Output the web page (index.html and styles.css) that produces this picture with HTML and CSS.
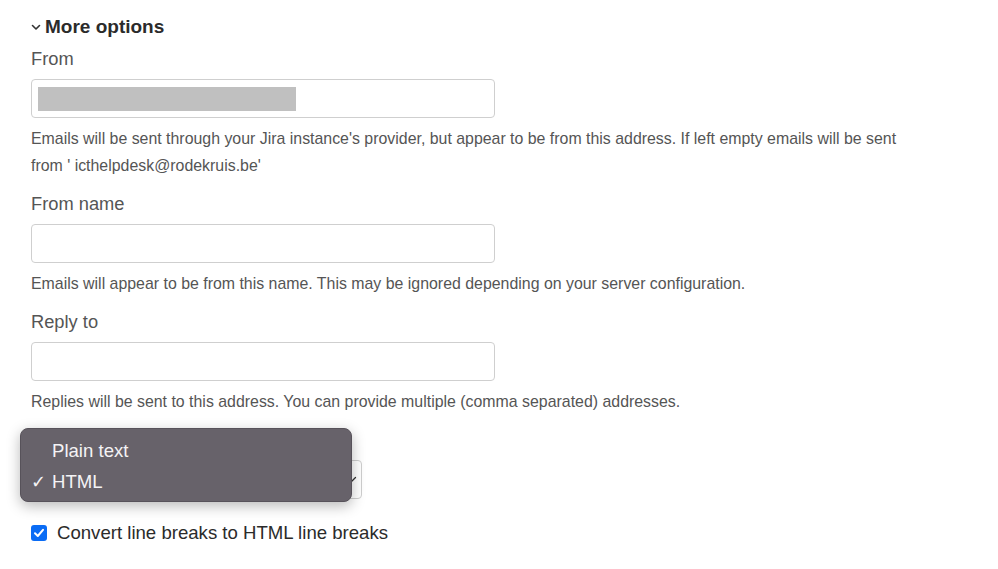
FILE: index.html
```html
<!DOCTYPE html>
<html>
<head>
<meta charset="utf-8">
<link rel="stylesheet" href="styles.css">
</head>
<body>
<div class="form">
  <h2 class="section-title">
    <svg class="chev" width="10" height="7" viewBox="0 0 10 7"><path d="M1.5 1.5 L5 5 L8.5 1.5" fill="none" stroke="#333" stroke-width="1.6" stroke-linecap="round" stroke-linejoin="round"/></svg>
    More options
  </h2>

  <div class="field">
    <div class="label">From</div>
    <div class="input"><span class="redacted"></span></div>
    <div class="help">Emails will be sent through your Jira instance's provider, but appear to be from this address. If left empty emails will be sent from ' icthelpdesk@rodekruis.be'</div>
  </div>

  <div class="field">
    <div class="label">From name</div>
    <div class="input"></div>
    <div class="help">Emails will appear to be from this name. This may be ignored depending on your server configuration.</div>
  </div>

  <div class="field">
    <div class="label">Reply to</div>
    <div class="input"></div>
    <div class="help">Replies will be sent to this address. You can provide multiple (comma separated) addresses.</div>
  </div>

  <div class="field select-field">
    <div class="select">
      <svg class="select-chev" width="10" height="7" viewBox="0 0 10 7"><path d="M1.5 1.5 L5 5 L8.5 1.5" fill="none" stroke="#333" stroke-width="1.3" stroke-linecap="round" stroke-linejoin="round"/></svg>
    </div>
    <div class="menu">
      <div class="menu-item"><span class="check"></span>Plain text</div>
      <div class="menu-item"><span class="check">✓</span>HTML</div>
    </div>
  </div>

  <label class="checkbox-row">
    <span class="checkbox">
      <svg width="16" height="16" viewBox="0 0 16 16"><path d="M4 8.3 L6.8 11 L12 4.8" fill="none" stroke="#fff" stroke-width="2" stroke-linecap="round" stroke-linejoin="round"/></svg>
    </span>
    Convert line breaks to HTML line breaks
  </label>
</div>
</body>
</html>
```

FILE: styles.css
```css
html, body {
  margin: 0;
  padding: 0;
  background: #fff;
}

body {
  font-family: "Liberation Sans", Arial, Helvetica, sans-serif;
  color: #333;
}

.form {
  width: 880px;
  padding: 15px 0 0 31px;
  display: flex;
  flex-direction: column;
}

.section-title {
  margin: 0 0 8px 0;
  font-size: 19px;
  line-height: 24px;
  font-weight: bold;
  color: #2b2b2b;
  display: flex;
  align-items: center;
  gap: 4px;
}

.chev {
  display: block;
  margin-top: 1px;
}

.field {
  display: flex;
  flex-direction: column;
  margin-bottom: 13px;
}

.label {
  font-size: 18.3px;
  line-height: 24px;
  color: #555;
  margin-bottom: 8px;
}

.input {
  width: 464px;
  height: 39px;
  box-sizing: border-box;
  border: 1px solid #cfcfcf;
  border-radius: 4px;
  background: #fff;
  display: flex;
  align-items: center;
  padding-left: 6px;
}

.redacted {
  display: block;
  width: 258px;
  height: 24px;
  background: #c0c0c0;
}

.help {
  margin-top: 7px;
  font-size: 15.9px;
  line-height: 27px;
  color: #555;
}

.select-field {
  position: relative;
  margin-bottom: 0;
  padding-top: 32px;
}

.select {
  width: 331px;
  height: 39px;
  box-sizing: border-box;
  border: 1px solid #cfcfcf;
  border-radius: 4px;
  background: #fff;
  display: flex;
  align-items: center;
  justify-content: flex-end;
  padding: 0 4px 0 10px;
}

.select-chev {
  display: block;
}

.menu {
  position: absolute;
  left: -11px;
  top: 0;
  width: 332px;
  height: 74px;
  box-sizing: border-box;
  padding: 6px 0 5px;
  background: #67626a;
  border: 1px solid #57525a;
  border-radius: 8px;
  box-shadow: 0 4px 14px rgba(0, 0, 0, 0.28);
}

.menu-item {
  display: flex;
  align-items: center;
  height: 31px;
  font-size: 18.6px;
  color: #f4f3f5;
}

.check {
  display: inline-block;
  width: 31px;
  padding-left: 10px;
  box-sizing: border-box;
  font-size: 18px;
}

.checkbox-row {
  display: flex;
  align-items: center;
  gap: 10px;
  margin-top: 22px;
  font-size: 18.6px;
  line-height: 24px;
  color: #2b2b2b;
}

.checkbox {
  width: 16px;
  height: 16px;
  border-radius: 3px;
  background: #0a6cf5;
  display: block;
}

.checkbox svg {
  display: block;
}
```
